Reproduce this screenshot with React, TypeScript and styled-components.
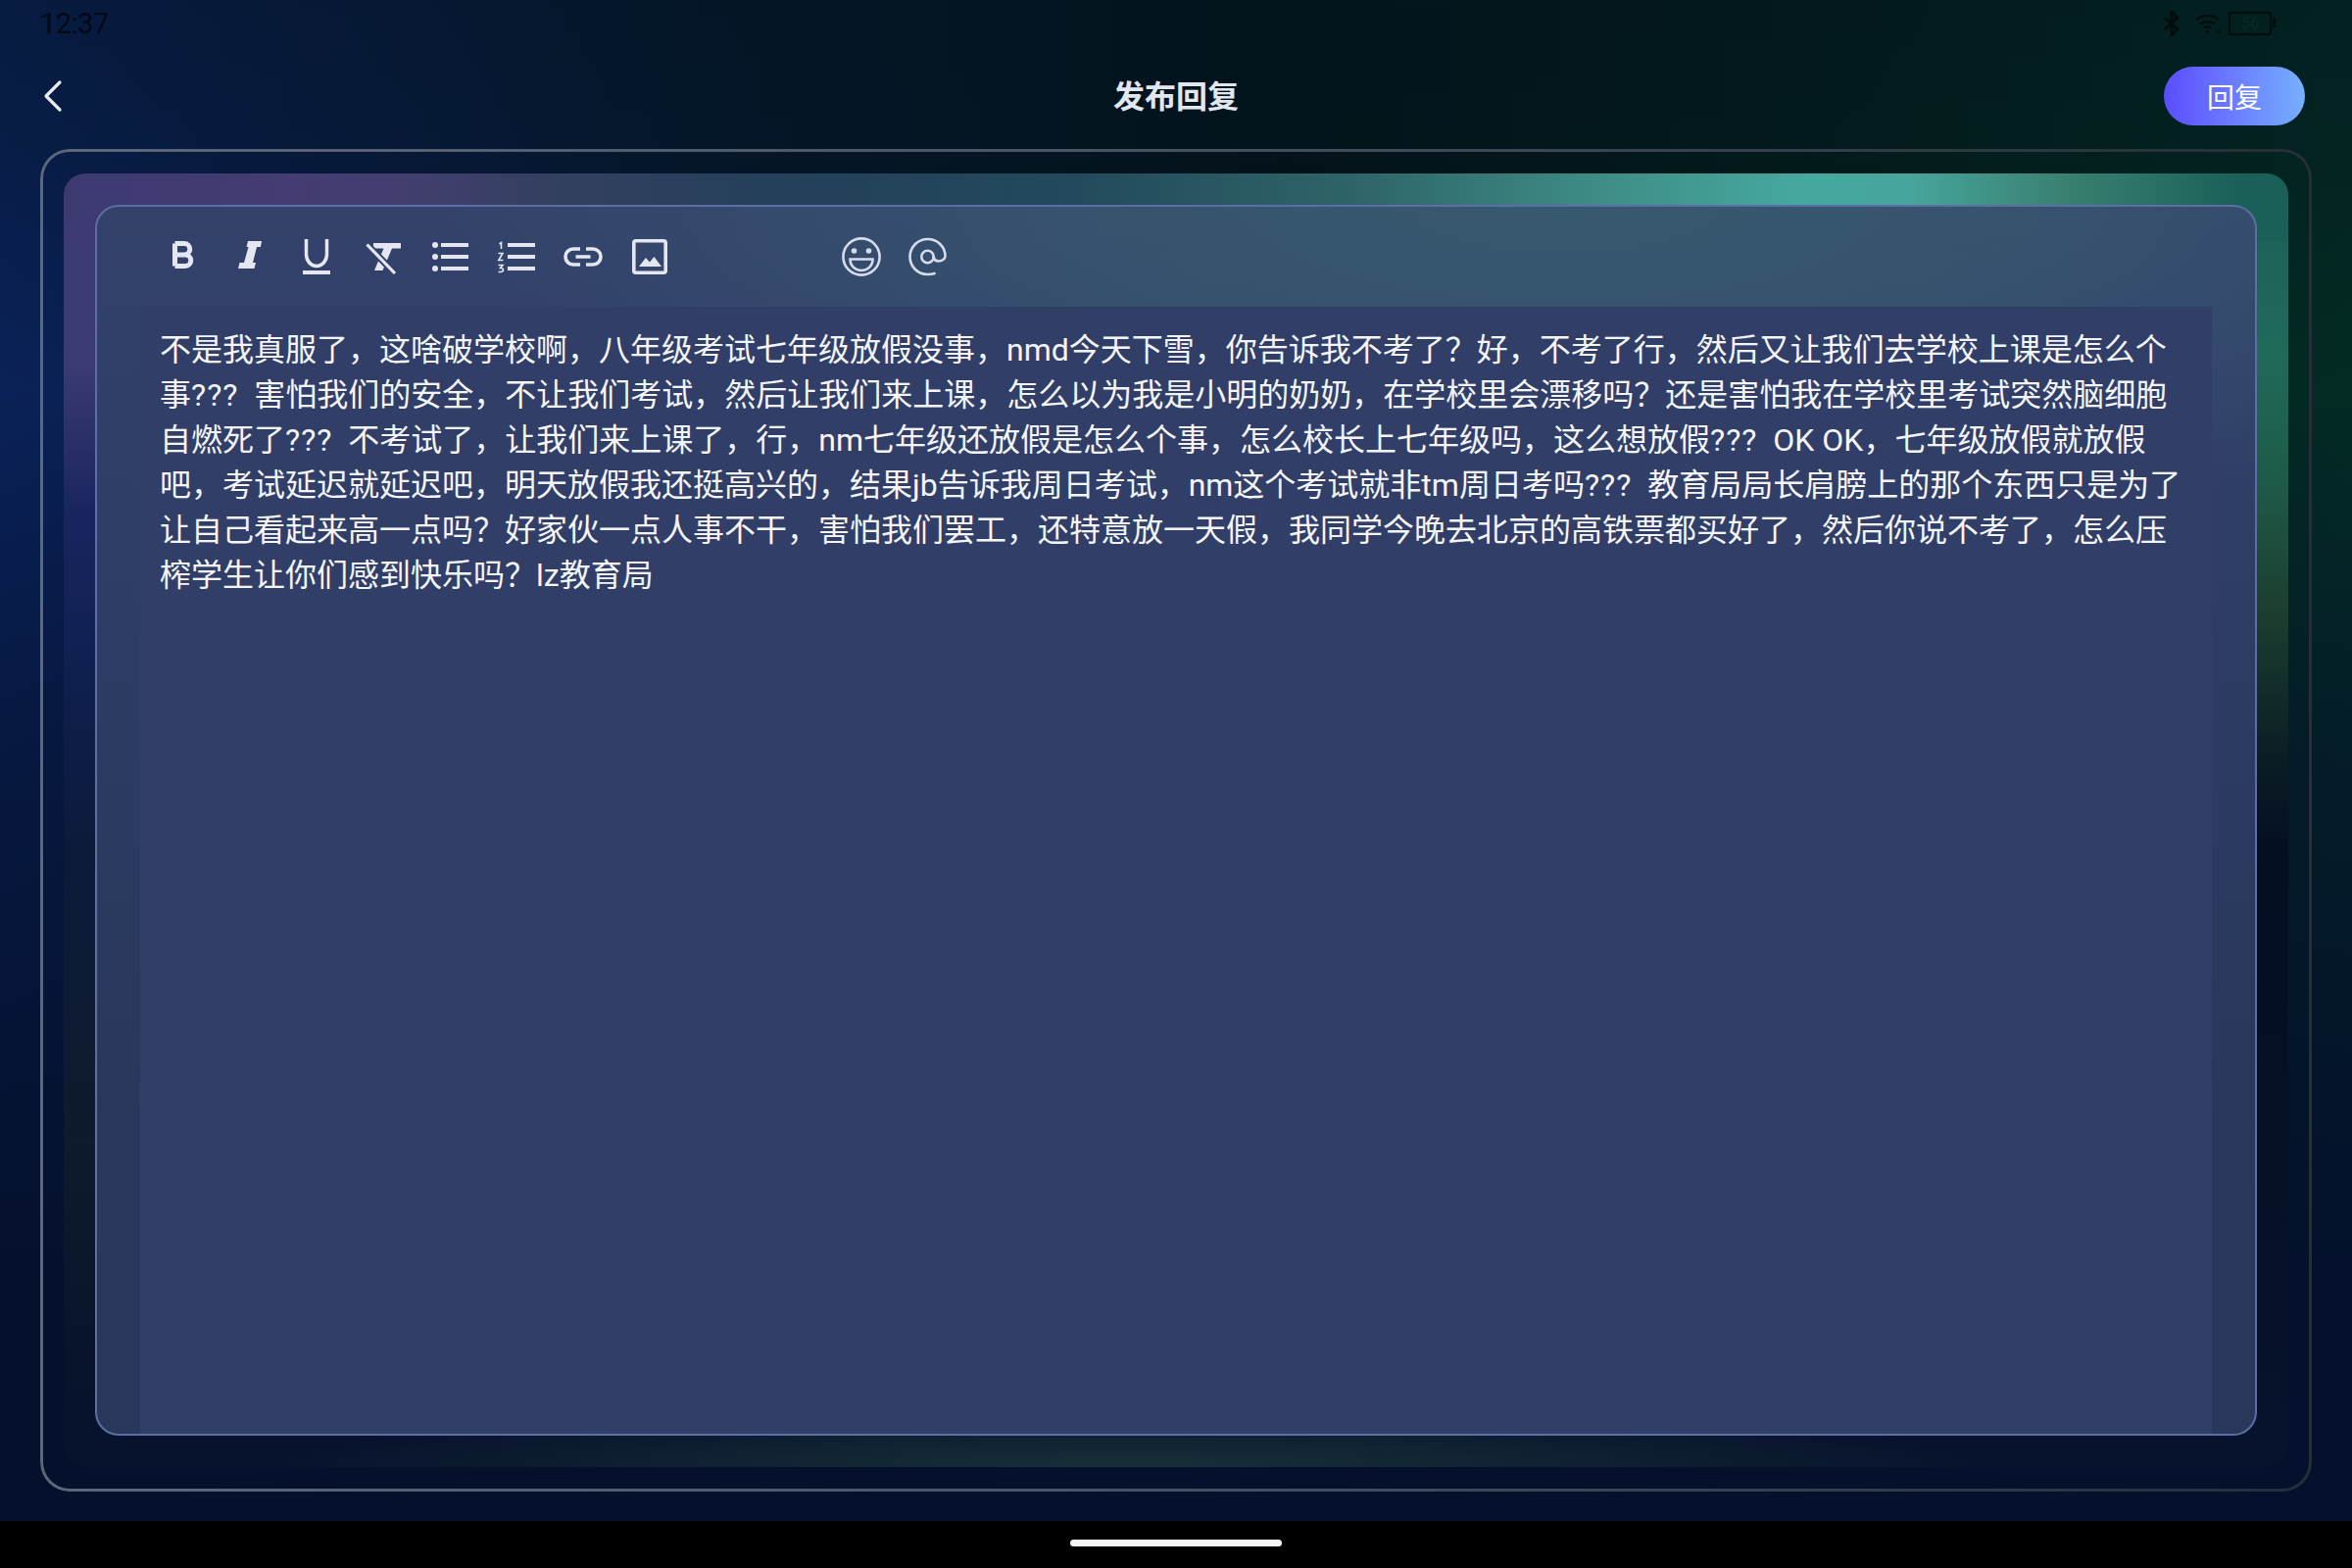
import React from "react";
import styled, { createGlobalStyle } from "styled-components";

const Global = createGlobalStyle`
  html, body { margin: 0; padding: 0; background: #000; }
  * { box-sizing: border-box; }
`;

const Page = styled.div`
  width: 2400px;
  height: 1600px;
  display: flex;
  flex-direction: column;
  overflow: hidden;
  font-family: "Roboto", "Noto Sans CJK SC", sans-serif;
`;

const Screen = styled.div`
  height: 1552px;
  display: flex;
  flex-direction: column;
  background:
    linear-gradient(180deg, rgba(3, 18, 30, 0.42) 0%, rgba(3, 18, 30, 0.3) 10%, rgba(3, 14, 24, 0.25) 11%, rgba(3, 18, 30, 0) 26%),
    linear-gradient(180deg, rgba(4, 16, 44, 0) 25%, rgba(4, 16, 44, 0.55) 50%, #04102c 85%),
    linear-gradient(90deg, #0a2259 0%, #081d45 14%, #05182c 32%, #03141a 55%, #03201c 80%, #032c24 100%);
`;

const StatusBar = styled.div`
  height: 48px;
  padding: 11px 82px 0 41px;
  display: flex;
  justify-content: space-between;
  align-items: flex-start;
`;

const Clock = styled.span`
  font: 400 29px/26px "Roboto", sans-serif;
  letter-spacing: -0.5px;
  color: #020818;
`;

const StatusIcons = styled.div`
  display: flex;
  align-items: center;
  gap: 8px;
`;

const Bluetooth = styled.svg`
  margin-right: 8px;
`;

const Battery = styled.div`
  width: 44px;
  height: 24px;
  border: 2.5px solid #010d0a;
  border-radius: 4px;
  display: flex;
  align-items: center;
  justify-content: center;
  font: 400 16px/1 "Roboto", sans-serif;
  color: #0a2a24;
  position: relative;
  &::after {
    content: "";
    position: absolute;
    right: -6px;
    top: 5px;
    width: 3px;
    height: 9px;
    background: #010d0a;
  }
`;

const Header = styled.header`
  height: 100px;
  padding: 0 48px 0 44px;
  display: flex;
  align-items: center;
  justify-content: space-between;
  position: relative;
`;

const BackButton = styled.div`
  width: 24px;
  height: 36px;
  display: flex;
  align-items: center;
`;

const Title = styled.h1`
  position: absolute;
  left: 0;
  right: 0;
  top: 28px;
  margin: 0;
  text-align: center;
  font-size: 32px;
  line-height: 46px;
  font-weight: 700;
  color: #e2e6ef;
`;

const ReplyButton = styled.div`
  width: 144px;
  height: 60px;
  border-radius: 30px;
  background: linear-gradient(90deg, #5a4dff 0%, #6a78ff 45%, #76b0ff 100%);
  color: #fff;
  font-size: 28px;
  display: flex;
  align-items: center;
  justify-content: center;
`;

const Frame = styled.div`
  margin: 4px 41px 0 41px;
  height: 1370px;
  padding: 25px 24px;
  position: relative;
  &::before {
    content: "";
    position: absolute;
    inset: 0;
    border-radius: 30px;
    padding: 3px;
    background: linear-gradient(90deg, #5c677c 0%, #4a5466 45%, #252f3a 100%);
    -webkit-mask: linear-gradient(#000 0 0) content-box, linear-gradient(#000 0 0);
    -webkit-mask-composite: xor;
    mask-composite: exclude;
  }
`;

const Panel = styled.div`
  height: 100%;
  border-radius: 22px;
  padding: 32px;
  background:
    linear-gradient(90deg, #3d3a72 0%, #443c72 10%, #433e70 15%, #33405f 22%, #24405a 32%, #22495c 45%, #2e6468 58%, #3f9088 70%, #45a8a0 78%, #46a59c 83%, #3a8070 90%, #1a5f58 98%, #1a5f58 100%) top / 100% 70px no-repeat,
    linear-gradient(180deg, #3d3a72 0%, #3b3a72 15%, #1a2560 26%, #0f2050 38%, #0c1a3a 52%, #0e1b2c 75%, #07122c 96%) left / 60px 100% no-repeat,
    linear-gradient(180deg, #1a5f58 0%, #206a5a 14%, #1e5a48 24%, #1c3e30 34%, #0b1e24 45%, #050f22 52%, #07122c 100%) right / 60px 100% no-repeat,
    radial-gradient(ellipse 900px 60px at 48% 100%, rgba(26, 54, 58, 0.85) 0%, rgba(20, 50, 56, 0) 100%),
    #07122c;
`;

const Card = styled.div`
  height: 100%;
  border: 2px solid #5d6da6;
  border-radius: 24px;
  background:
    radial-gradient(ellipse 1150px 340px at 68% 0%, #37596f 0%, rgba(55, 86, 111, 0.85) 40%, rgba(50, 70, 100, 0) 100%),
    linear-gradient(180deg, #34426a 0%, #31406a 12%, #2c3b62 45%, #29375a 75%, #29375a 100%);
  display: flex;
  flex-direction: column;
  overflow: hidden;
`;

const Toolbar = styled.div`
  height: 102px;
  flex: none;
  padding-left: 54px;
  display: flex;
  align-items: center;
`;

const ToolButton = styled.div`
  width: 68px;
  height: 40px;
  display: flex;
  justify-content: center;
  color: #e4e6f2;
`;

const ToolSpacer = styled.div`
  width: 148px;
`;

const Content = styled.div`
  flex: 1;
  margin: 0 44px;
  padding: 21px 0 0 20px;
  background: #313f68;
  color: #f4f5f8;
  font-size: 32px;
  line-height: 46px;
`;

const Line = styled.div`
  white-space: pre;
`;

const Marks = styled.span`
  letter-spacing: 1px;
`;

const NavBar = styled.div`
  flex: 1;
  background: #000;
  display: flex;
  justify-content: center;
  padding-top: 19px;
`;

const HomeIndicator = styled.div`
  width: 216px;
  height: 7px;
  border-radius: 4px;
  background: #f4f4f4;
`;

const lines = [
  "不是我真服了，这啥破学校啊，八年级考试七年级放假没事，nmd今天下雪，你告诉我不考了？好，不考了行，然后又让我们去学校上课是怎么个",
  "事???  害怕我们的安全，不让我们考试，然后让我们来上课，怎么以为我是小明的奶奶，在学校里会漂移吗？还是害怕我在学校里考试突然脑细胞",
  "自燃死了???  不考试了，让我们来上课了，行，nm七年级还放假是怎么个事，怎么校长上七年级吗，这么想放假???  OK OK，七年级放假就放假",
  "吧，考试延迟就延迟吧，明天放假我还挺高兴的，结果jb告诉我周日考试，nm这个考试就非tm周日考吗???  教育局局长肩膀上的那个东西只是为了",
  "让自己看起来高一点吗？好家伙一点人事不干，害怕我们罢工，还特意放一天假，我同学今晚去北京的高铁票都买好了，然后你说不考了，怎么压",
  "榨学生让你们感到快乐吗？lz教育局",
];

const Icon: React.FC<{ children: React.ReactNode }> = ({ children }) => (
  <svg width="40" height="40" viewBox="0 0 40 40" fill="none" stroke="none">
    {children}
  </svg>
);

const BoldIcon = () => (
  <Icon>
    <path d="M11.5 6.5V29.5M11.5 6.5H21a5.7 5.7 0 0 1 0 11.5H11.5M11.5 18H22a5.7 5.7 0 0 1 0 11.5H11.5" stroke="currentColor" strokeWidth="5" />
  </Icon>
);
const ItalicIcon = () => (
  <Icon>
    <path d="M18 4H32L31 10H27L23 26H26L24.5 32H8L9.5 26H14L18.5 10H16.5Z" fill="currentColor" />
  </Icon>
);
const UnderlineIcon = () => (
  <Icon>
    <path d="M9.5 2V17.5a10.5 12 0 0 0 21 0V2" stroke="currentColor" strokeWidth="3.5" />
    <rect x="6" y="34" width="28" height="4" fill="currentColor" />
  </Icon>
);
const ClearIcon = () => (
  <Icon>
    <path d="M10 6H38V11.5H29L19.5 34H11L20.5 11.5H10Z" fill="currentColor" />
    <path d="M3 7L32 37" stroke="#34436b" strokeWidth="7" />
    <path d="M3.5 7.5L32 37" stroke="currentColor" strokeWidth="3.2" />
  </Icon>
);
const BulletIcon = () => (
  <Icon>
    <circle cx="5" cy="8" r="3" fill="currentColor" />
    <circle cx="5" cy="20" r="3" fill="currentColor" />
    <circle cx="5" cy="32" r="3" fill="currentColor" />
    <path d="M11 8H39M11 20H39M11 32H39" stroke="currentColor" strokeWidth="4" />
  </Icon>
);
const NumberIcon = () => (
  <Icon>
    <path d="M2.5 7L4.5 5.5V12" stroke="currentColor" strokeWidth="1.6" />
    <path d="M1.5 16.5H6L1.8 23.5H6.4" stroke="currentColor" strokeWidth="1.6" />
    <path d="M1.5 28.5H6L3.5 31.5C6 31.5 6.5 32.5 6.5 33.5S5.5 35.5 3.5 35.5H1.5" stroke="currentColor" strokeWidth="1.6" />
    <path d="M11 8H39M11 20H39M11 32H39" stroke="currentColor" strokeWidth="4" />
  </Icon>
);
const LinkIcon = () => (
  <Icon>
    <path d="M17 12H10a8 8 0 0 0 0 16H17M23 12H30a8 8 0 0 1 0 16H23M12.5 20H27.5" stroke="currentColor" strokeWidth="3.6" />
  </Icon>
);
const ImageIcon = () => (
  <Icon>
    <rect x="3.8" y="3.8" width="32.4" height="32.4" rx="2" stroke="currentColor" strokeWidth="3.6" />
    <path d="M9 30L16 21L20 25.5L24.5 20L32 30Z" fill="currentColor" />
  </Icon>
);
const SmileIcon = () => (
  <Icon>
    <circle cx="20" cy="20" r="18.6" stroke="#d5dcec" strokeWidth="2.6" />
    <circle cx="12.5" cy="14" r="2.8" fill="#d5dcec" />
    <circle cx="27.5" cy="14" r="2.8" fill="#d5dcec" />
    <path d="M8.5 22.5H31.5C31.5 29.5 26 34 20 34S8.5 29.5 8.5 22.5Z" stroke="#d5dcec" strokeWidth="2.6" />
  </Icon>
);
const AtIcon = () => (
  <Icon>
    <circle cx="19.5" cy="20" r="6.2" stroke="#d5dcec" strokeWidth="2.6" />
    <path d="M25.7 20C26 23 28 24.5 31 24.5S37.5 22 37.5 19.5C37.5 9.5 29.5 2 19.5 2S1.5 10 1.5 20S9.5 38 19.5 38C22 38 24.5 37.7 26.5 37" stroke="#d5dcec" strokeWidth="2.6" strokeLinecap="round" />
  </Icon>
);

export default function App() {
  return (
    <Page>
      <Global />
      <Screen>
        <StatusBar>
          <Clock>12:37</Clock>
          <StatusIcons>
            <Bluetooth width="16" height="26" viewBox="0 0 16 26" fill="none" stroke="#010d0a" strokeWidth="2.6">
              <path d="M1 7L14 19L8 25V1L14 7L1 19" />
            </Bluetooth>
            <svg width="26" height="24" viewBox="0 0 26 24" fill="none" stroke="#010d0a" strokeWidth="2.4">
              <path d="M1.5 8C7 2.5 18 2.5 23.5 8M5.5 12.5C9 9.5 16 9.5 19.5 12.5M9 16.5C11 15 14 15 16 16.5" />
              <circle cx="12.5" cy="20.5" r="1.8" fill="#010d0a" stroke="none" />
              <path d="M22 18V22M24.5 18V22" strokeWidth="1.4" />
            </svg>
            <Battery>56</Battery>
          </StatusIcons>
        </StatusBar>
        <Header>
          <BackButton>
            <svg width="20" height="34" viewBox="0 0 20 34" fill="none" stroke="#e8ebf4" strokeWidth="3.2" strokeLinecap="round" strokeLinejoin="round">
              <path d="M17 3L3 17L17 31" />
            </svg>
          </BackButton>
          <Title>发布回复</Title>
          <ReplyButton>回复</ReplyButton>
        </Header>
        <Frame>
          <Panel>
            <Card>
              <Toolbar>
                <ToolButton><BoldIcon /></ToolButton>
                <ToolButton><ItalicIcon /></ToolButton>
                <ToolButton><UnderlineIcon /></ToolButton>
                <ToolButton><ClearIcon /></ToolButton>
                <ToolButton><BulletIcon /></ToolButton>
                <ToolButton><NumberIcon /></ToolButton>
                <ToolButton><LinkIcon /></ToolButton>
                <ToolButton><ImageIcon /></ToolButton>
                <ToolSpacer />
                <ToolButton><SmileIcon /></ToolButton>
                <ToolButton><AtIcon /></ToolButton>
              </Toolbar>
              <Content>
                {lines.map((l) => (
                  <Line key={l}>
                    {l.split("???").map((part, i) => (
                      <React.Fragment key={i}>
                        {i > 0 && <Marks>???</Marks>}
                        {part}
                      </React.Fragment>
                    ))}
                  </Line>
                ))}
              </Content>
            </Card>
          </Panel>
        </Frame>
      </Screen>
      <NavBar>
        <HomeIndicator />
      </NavBar>
    </Page>
  );
}
